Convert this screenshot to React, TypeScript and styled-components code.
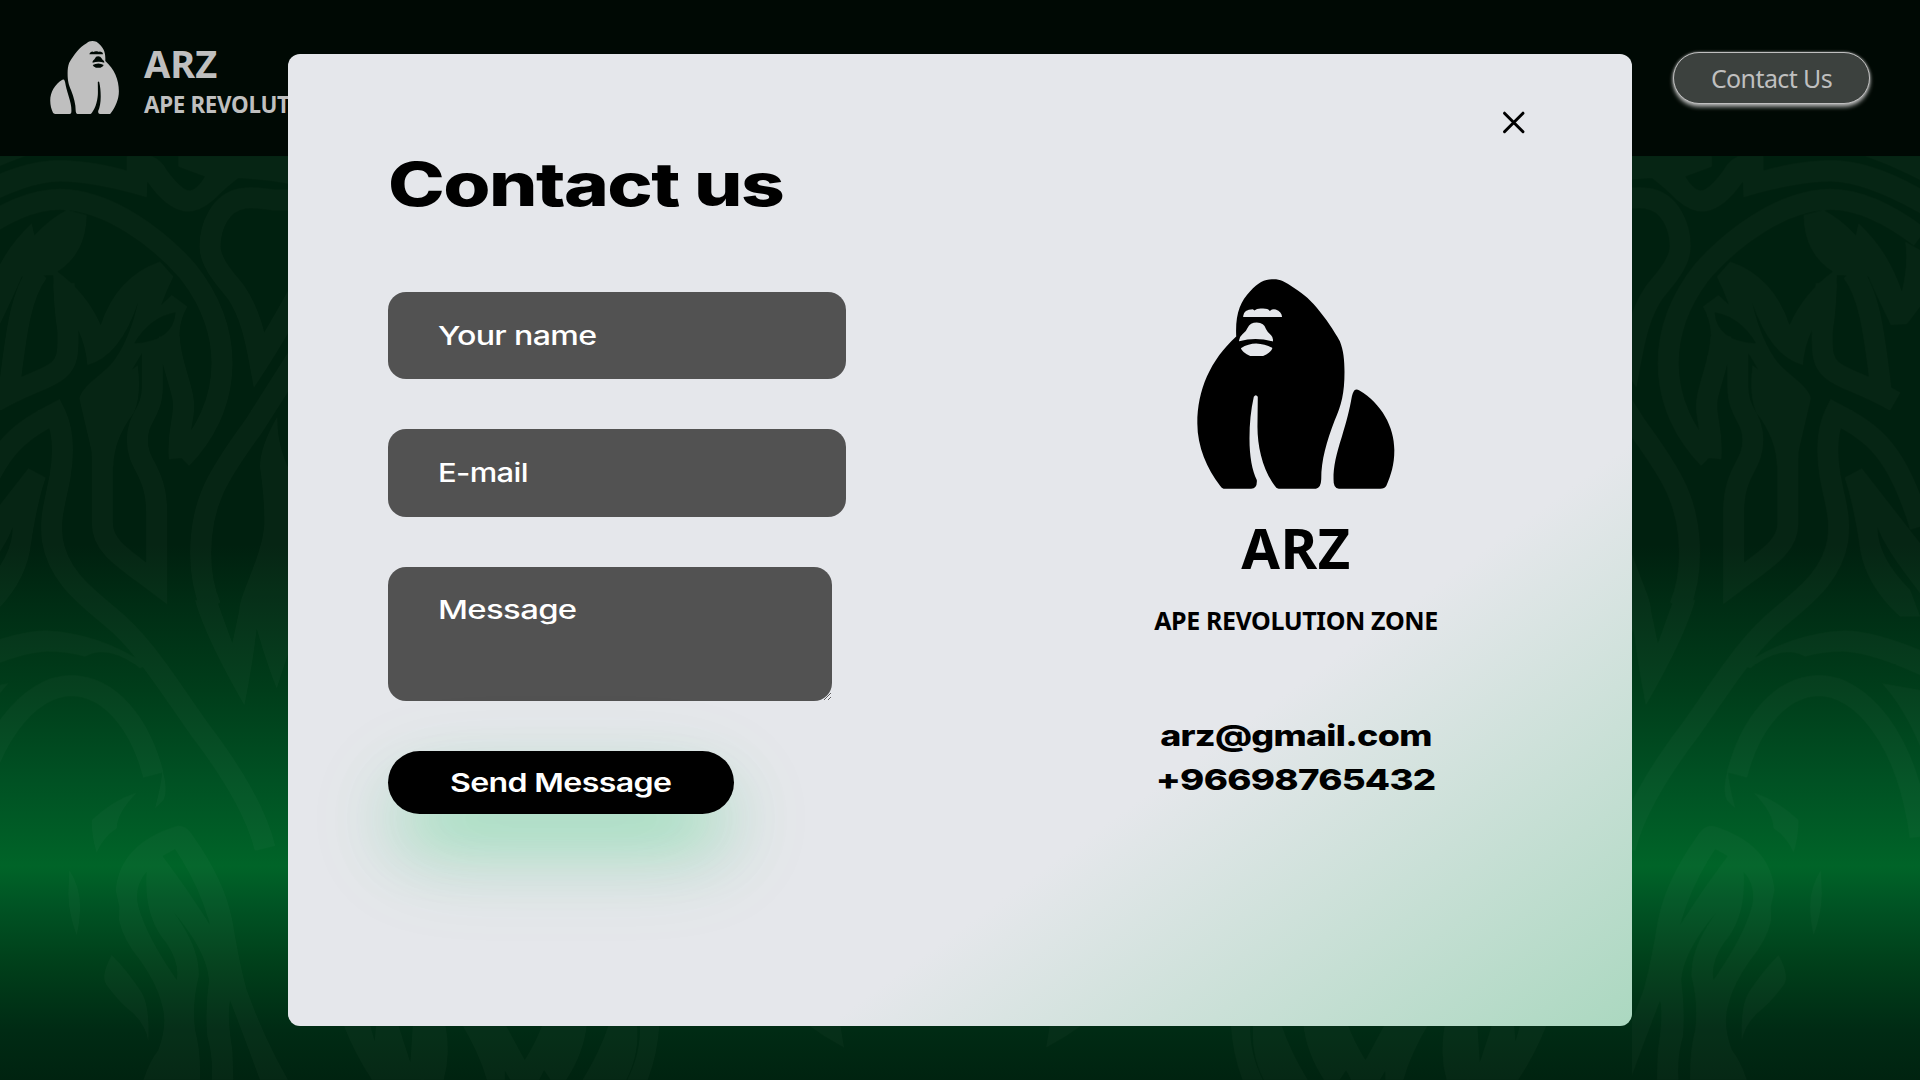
import React from "react";
import styled, { createGlobalStyle } from "styled-components";

const GlobalStyle = createGlobalStyle`
  *, *::before, *::after { box-sizing: border-box; }
  html, body { margin: 0; height: 100%; overflow: hidden; background: #00200f; }
  h1, h2, p { margin: 0; }
`;

const brandFont = `"Noto Sans", "Open Sans", sans-serif`;
const displayFont = `Inter, "DejaVu Sans", sans-serif`;

const Page = styled.div`
  position: relative;
  width: 1920px;
  height: 1080px;
  overflow: hidden;
  font-family: ${brandFont};
  background: linear-gradient(
    180deg,
    #00200f 0,
    #00200f 545px,
    #002d14 605px,
    #003d1a 690px,
    #005123 780px,
    #006428 866px,
    #005424 905px,
    #003f1a 965px,
    #002b14 1030px,
    #002310 1080px
  );
`;

const Pattern = styled.svg`
  position: absolute;
  inset: 0;
  width: 1920px;
  height: 1080px;
`;

const Header = styled.header`
  position: relative;
  display: flex;
  justify-content: space-between;
  align-items: flex-start;
  height: 156px;
  padding: 41px 50px 0;
  background: #000904;
  color: #bfbfbf;
`;

const Brand = styled.div`
  display: flex;
  gap: 25px;
`;

const BrandText = styled.div`
  display: flex;
  flex-direction: column;
  white-space: nowrap;
  font-weight: 700;
`;

const BrandName = styled.span`
  font-size: 38px;
  line-height: 45px;
`;

const BrandTag = styled.span`
  font-size: 22.4px;
  line-height: 37px;
  letter-spacing: -0.32px;
`;

const NavButton = styled.button`
  width: 197px;
  height: 52px;
  margin-top: 11px;
  padding: 0;
  border: 1px solid #bfbfbf;
  border-radius: 26px;
  background: #3c413e;
  box-shadow: 0 3px 4px rgba(191, 191, 191, 0.85), 0 0 3px rgba(191, 191, 191, 0.7);
  color: #bfbfbf;
  font: 400 25px/49px ${brandFont};
  letter-spacing: -0.6px;
`;

const Overlay = styled.div`
  position: absolute;
  inset: 0;
  display: flex;
  align-items: center;
  justify-content: center;
`;

const Modal = styled.section`
  display: grid;
  grid-template-columns: 1fr 472px;
  width: 1344px;
  height: 972px;
  padding: 0 100px;
  border-radius: 12px;
  overflow: hidden;
  color: #000;
  background: linear-gradient(to bottom right, #e5e7eb 0, #e5e7eb 70%, #abd8c0 100%);
`;

const FormColumn = styled.div`
  display: flex;
  flex-direction: column;
  align-items: flex-start;
  padding-top: 96px;
`;

const Stretch = styled.span<{ $x: number; $center?: boolean }>`
  display: inline-block;
  white-space: nowrap;
  letter-spacing: -0.02em;
  transform: scaleX(${(p) => p.$x});
  transform-origin: ${(p) => (p.$center ? "center" : "left")};
`;

const Title = styled.h1`
  height: 72px;
  font: 800 60px/69px ${displayFont};
`;

const Form = styled.form`
  display: flex;
  flex-direction: column;
  align-items: flex-start;
  gap: 50px;
  margin-top: 70px;
`;

const Field = styled.label<{ $w: number }>`
  display: grid;
  width: ${(p) => p.$w}px;
  font: 500 26px/32px ${displayFont};
  color: #fff;
  & > * { grid-area: 1 / 1; }
`;

const Hint = styled.span`
  padding: 27.7px 50px;
  z-index: 1;
  pointer-events: none;
`;

const Input = styled.input`
  width: 100%;
  height: 87.4px;
  padding: 0 50px;
  border: 0;
  border-radius: 18px;
  background: #525252;
  color: inherit;
  font: inherit;
`;

const TextArea = styled.textarea`
  display: block;
  width: 100%;
  height: 134px;
  padding: 28px 50px;
  border: 0;
  border-radius: 18px;
  background: #525252;
  color: inherit;
  font: inherit;
  overflow: auto;
`;

const SendButton = styled.button`
  width: 346px;
  height: 63px;
  padding: 0;
  border: 0;
  border-radius: 32px;
  background: #000;
  color: #fff;
  font: 600 26px/63px ${displayFont};
  box-shadow: 0 36px 68px -14px rgba(0, 209, 83, 0.42), 0 36px 100px rgba(0, 180, 90, 0.14);
`;

const InfoColumn = styled.div`
  display: flex;
  flex-direction: column;
`;

const CloseRow = styled.div`
  display: flex;
  justify-content: flex-end;
  height: 225px;
  padding: 56px 6px 0 0;
`;

const CloseButton = styled.button`
  width: 24px;
  height: 24px;
  padding: 0;
  border: 0;
  background: none;
`;

const InfoBody = styled.div`
  display: flex;
  flex-direction: column;
  align-items: center;
  white-space: nowrap;
`;

const InfoName = styled.h2`
  margin-top: 20px;
  font: 700 56px/76px ${brandFont};
  letter-spacing: 0.5px;
`;

const InfoTag = styled.p`
  margin-top: 17px;
  font: 700 25px/36px ${brandFont};
  letter-spacing: -0.4px;
`;

const Contacts = styled.div`
  display: flex;
  flex-direction: column;
  align-items: center;
  margin-top: 76px;
  font: 800 29px/44px ${displayFont};
`;

const Gorilla = ({ width, height, flip }: { width: number; height: number; flip?: boolean }) => (
  <svg width={width} height={height} viewBox="110 56 596 631" preserveAspectRatio="none" fill="currentColor">
    <g transform={flip ? "translate(816 0) scale(-1 1)" : undefined} fillRule="evenodd">
      <path
        d="M228 229C225 160 240 125 270 93C295 65 315 57 340 57C362 57 375 65 390 75C425 97 445 112 470 142C500 178 520 208 540 243C551 270 554 300 554 335C554 400 545 435 524 482C500 545 484 600 484 658Q483 685 468 686H356Q349 686 344 677C308 630 292 560 292 500L293 410Q287 400 281 410C272 450 268 490 268 535C268 590 276 630 290 660Q292 686 273 686H190Q184 685 180 678C140 625 111 560 111 490C111 390 150 300 228 229Z
        M249 167Q251 148 278 147L283 151Q290 144 305 145Q323 144 329 152Q338 145 347 148Q365 155 366 170H249Z
        M262 203Q270 187 290 187Q312 187 318 207Q322 216 333 225Q341 233 338 244Q288 229 237 243Q235 233 246 223Q258 214 262 203Z
        M242 264Q265 250 288 250Q315 251 337 263Q333 278 309 287H270Q247 278 242 264Z"
      />
      <path d="M584 390Q590 385 599 391C665 430 704 500 704 570C704 615 694 645 680 677Q675 686 662 686H537Q520 686 521 658C520 620 530 580 546 530C561 480 569 450 575 415Q578 397 584 390Z" />
    </g>
  </svg>
);

const SidePattern = () => (
  <>
    <g fill="none" stroke="#fff" strokeWidth="63" strokeLinejoin="miter">
      <path d="M-90 262Q60 148 180 148C330 150 480 270 560 360C640 460 666 560 666 640C666 760 610 860 545 925" />
      <path d="M538 925C530 830 560 800 548 740C535 680 508 620 508 560" />
      <path d="M115 365C65 430 50 530 28 715" />
      <path d="M-15 755C80 700 140 690 175 660C205 635 204 600 204 560C204 510 195 470 192 400" />
      <path d="M307 890V1120C307 1190 370 1225 470 1300V1090C470 960 412 950 412 870C412 800 457 790 457 710V590" />
      <path d="M900 150H820C780 145 760 140 730 145C660 155 630 230 630 290C630 340 680 390 710 430C750 490 765 560 778 630Q830 550 890 440" />
      <path d="M900 610L760 830C650 980 602 1060 602 1210C602 1280 615 1330 632 1370" />
      <path d="M-90 1130C-20 900 50 850 165 790C195 850 190 920 180 980C160 1080 150 1100 157 1170C175 1280 260 1340 330 1400C430 1480 500 1600 600 1740Q760 1950 795 2095" />
      <path d="M-90 2060C-50 1760 90 1607 215 1607C330 1610 420 1720 460 1875" />
    </g>
    <g fill="#fff" fillRule="evenodd">
      <path d="M-90 115Q60 30 180 30Q300 35 380 62V18H455Q485 30 500 60Q545 122 570 122Q590 120 615 80L535 50V18H884V105Q820 90 715 84Q680 110 640 150Q600 185 560 185Q500 180 442 95L440 142Q280 95 180 95Q80 95 -90 190Z" />
      <path d="M-90 18H80Q20 35 -90 90Z" />
      <path d="M-35 425C-10 350 30 280 95 220L103 256Q150 205 200 180L260 195Q258 310 172 365Q260 430 302 525Q350 380 480 335L520 380Q500 420 483 465L515 435L562 470Q538 510 538 560L500 640L425 610L395 660L413 645Q425 740 400 790Q340 870 340 950L276 930L275 905L238 745C250 700 320 670 350 620Q390 560 415 455Q360 620 262 645Q258 590 235 540H172Q160 470 160 375L65 380Q40 440 -2 525L-50 522L-90 470V300L-45 275Q-55 340 -35 425ZM402 580Q450 500 527 487Q520 575 402 580Z" />
      <path d="M832 800Q780 890 780 950Q794 1050 793 1120C790 1210 720 1330 718 1380L697 1480L650 1350L585 1350Q620 1470 733 1665Q755 1560 770 1435Q800 1540 830 1615L884 1450V990Q830 900 832 800Z" />
      <path d="M-90 1180L85 955L137 983Q110 1060 90 1200Q70 1310 -30 1400L-90 1400L-60 1320Q40 1220 38 1130Q20 1190 -90 1330Z" />
      <path d="M-90 1500Q60 1440 140 1442Q300 1450 440 1545L420 1555Q360 1506 300 1506Q270 1510 255 1520Q200 1505 140 1505Q60 1508 -90 1575Z" />
      <path d="M25 1600L-90 1620V1790Q-40 1670 25 1600Z" />
      <path d="M275 2010Q340 1950 410 1928Q350 1990 350 2035Q310 2060 290 2108Q275 2060 275 2010Z" />
      <path d="M487 1860Q505 1920 490 1950L465 1975Q485 1900 487 1860Z" />
      <path d="M208 2160Q240 2210 240 2270Q240 2310 230 2355Q205 2290 205 2230Z" />
      <path d="M335 2415Q300 2480 320 2505Q360 2560 400 2590Q440 2630 445 2675Q450 2560 420 2520Q380 2460 335 2415Z" />
      <path d="M530 2028Q560 2025 580 2060Q680 2200 700 2330Q720 2450 740 2520Q790 2660 864 2790H780Q740 2680 690 2550Q680 2600 697 2700L700 2790H635Q640 2720 622 2660Q615 2580 627 2490Q620 2400 515 2280Q600 2390 596 2480Q575 2560 585 2640Q602 2700 600 2790H430Q450 2730 475 2700Q505 2620 485 2560Q470 2500 420 2430Q370 2370 357 2310L358 2270L347 2220Q360 2080 530 2028ZM487 2118L525 2097Q600 2210 630 2325Q550 2200 487 2118ZM440 2165Q400 2210 415 2270Q440 2360 530 2490Q540 2440 500 2380Q430 2300 440 2165Z" />
    </g>
  </>
);

const FooterPattern = () => (
  <g fill="#fff">
    <path d="M108 130H160L170 185L173 130H215L240 248L245 130H268Q280 200 265 300H165Q130 220 108 130Z" />
    <path d="M268 130H308Q320 220 305 300H262Q275 220 268 130Z" />
    <path d="M340 130H425L464 240Q485 190 500 130H586Q580 220 545 300H515L502 270L492 300H436L425 272V300H390Q375 220 340 130Z" />
    <path d="M630 130H684Q690 220 663 300H577Q610 220 630 130Z" />
    <path d="M690 130H728Q725 220 705 300H665Q692 220 690 130Z" />
    <path d="M1015 130H1082L1090 203Q1050 170 1015 130Z" />
  </g>
);

const Backdrop = () => (
  <Pattern viewBox="0 0 1920 1080">
    <defs>
      <clipPath id="left"><rect width="288" height="1080" /></clipPath>
      <clipPath id="right"><rect x="1632" width="288" height="1080" /></clipPath>
    </defs>
    <g opacity="0.024">
      <g clipPath="url(#left)">
        <g transform="translate(0 150) scale(.33333)"><SidePattern /></g>
      </g>
      <g clipPath="url(#right)">
        <g transform="translate(1890.3 150) scale(-.33333 .33333)"><SidePattern /></g>
      </g>
      <g transform="translate(288 980) scale(.5102 .33333)"><FooterPattern /></g>
      <g transform="translate(1602.3 980) scale(-.5102 .33333)"><FooterPattern /></g>
    </g>
  </Pattern>
);

export default function App() {
  return (
    <Page>
      <GlobalStyle />
      <Backdrop />
      <Header>
        <Brand>
          <Gorilla width={69} height={73} flip />
          <BrandText>
            <BrandName>ARZ</BrandName>
            <BrandTag>APE REVOLUTION ZONE</BrandTag>
          </BrandText>
        </Brand>
        <NavButton>Contact Us</NavButton>
      </Header>
      <Overlay>
        <Modal>
          <FormColumn>
            <Title><Stretch $x={1.272}>Contact us</Stretch></Title>
            <Form>
              <Field $w={458}>
                <Input type="text" />
                <Hint><Stretch $x={1.235}>Your name</Stretch></Hint>
              </Field>
              <Field $w={458}>
                <Input type="email" />
                <Hint><Stretch $x={1.19}>E-mail</Stretch></Hint>
              </Field>
              <Field $w={444}>
                <TextArea />
                <Hint><Stretch $x={1.265}>Message</Stretch></Hint>
              </Field>
              <SendButton type="button"><Stretch $x={1.235} $center>Send Message</Stretch></SendButton>
            </Form>
          </FormColumn>
          <InfoColumn>
            <CloseRow>
              <CloseButton aria-label="Close">
                <svg width="24" height="24" viewBox="0 0 24 24" fill="none" stroke="#000" strokeWidth="3" strokeLinecap="round">
                  <path d="M2.5 3.2l18.5 18.5M21 3.2l-18.5 18.5" />
                </svg>
              </CloseButton>
            </CloseRow>
            <InfoBody>
              <Gorilla width={198} height={210} />
              <InfoName>ARZ</InfoName>
              <InfoTag>APE REVOLUTION ZONE</InfoTag>
              <Contacts>
                <Stretch $x={1.235} $center>arz@gmail.com</Stretch>
                <Stretch $x={1.265} $center>+96698765432</Stretch>
              </Contacts>
            </InfoBody>
          </InfoColumn>
        </Modal>
      </Overlay>
    </Page>
  );
}
